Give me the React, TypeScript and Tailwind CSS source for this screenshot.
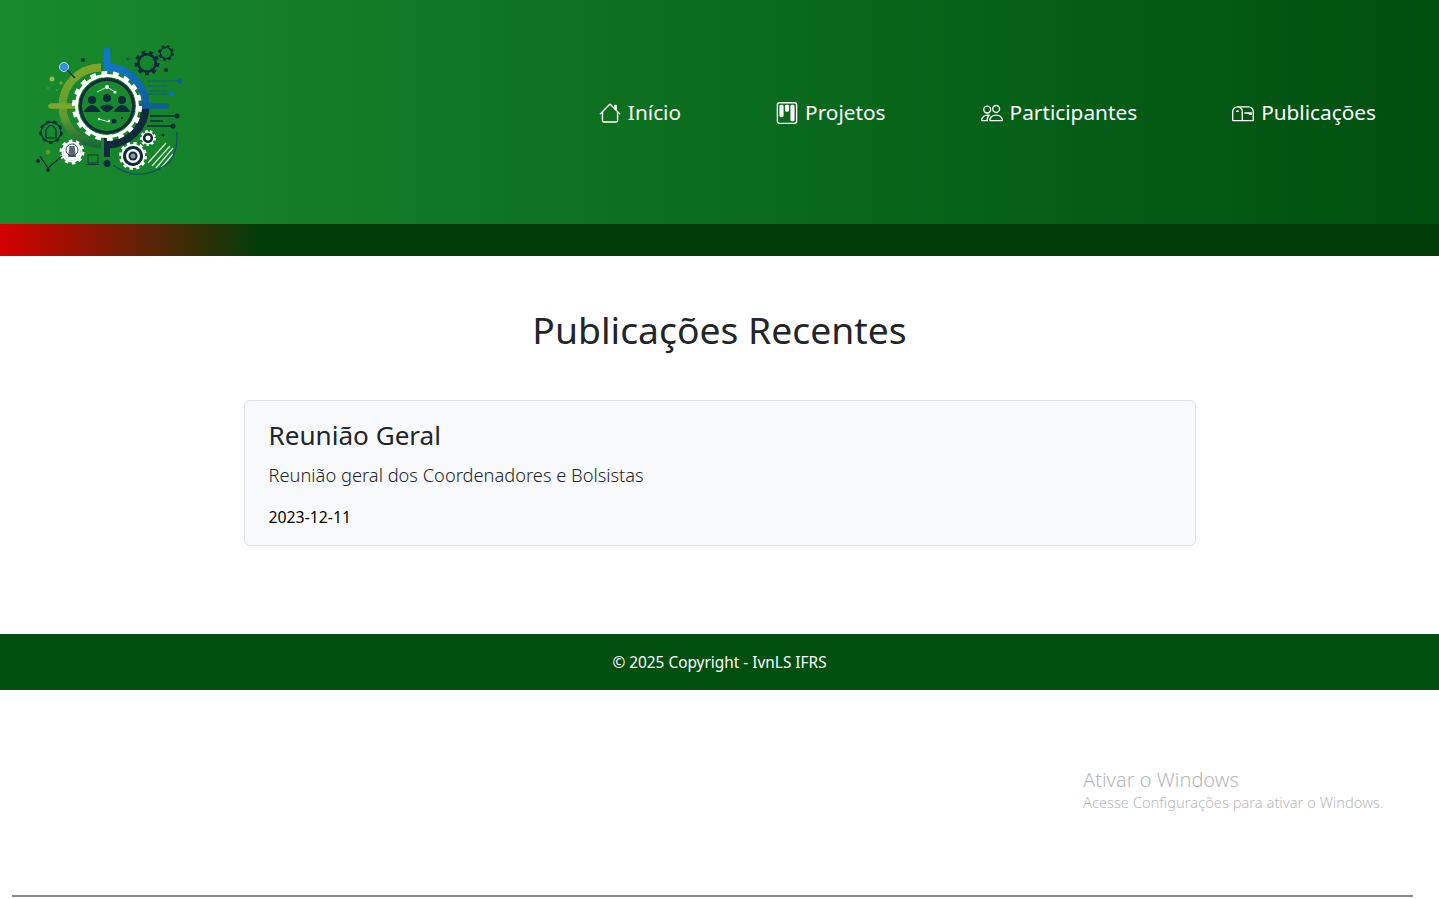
import { BsHouse, BsKanban, BsPeople, BsMailbox } from 'react-icons/bs';

const NAV = [
  { label: 'Início', Icon: BsHouse },
  { label: 'Projetos', Icon: BsKanban },
  { label: 'Participantes', Icon: BsPeople },
  { label: 'Publicações', Icon: BsMailbox },
];

const DARK = '#0f2a3a';

function Gear({ x, y, r, teeth, color, hole, width }: { x: number; y: number; r: number; teeth: number; color: string; hole?: string; width: number }) {
  const circ = 2 * Math.PI * r;
  const dash = circ / teeth / 2;
  return (
    <g>
      <circle cx={x} cy={y} r={r} fill="none" stroke={color} strokeWidth={width} strokeDasharray={`${dash} ${dash}`} />
      <circle cx={x} cy={y} r={r - width / 4} fill="none" stroke={color} strokeWidth={width / 2} />
      {hole && <circle cx={x} cy={y} r={r - width / 2} fill={hole} />}
    </g>
  );
}

function Logo() {
  return (
    <svg width="180" height="160" viewBox="0 0 180 160" className="mb-1 shrink-0">
      <defs>
        <linearGradient id="greenArc" x1="0" y1="0" x2="0" y2="1">
          <stop offset="0" stopColor="#7da52c" />
          <stop offset="0.65" stopColor="#5f9a30" />
          <stop offset="1" stopColor="#1a6a3a" />
        </linearGradient>
        <linearGradient id="blueArc" x1="0" y1="0" x2="1" y2="1">
          <stop offset="0" stopColor="#0f78c8" />
          <stop offset="1" stopColor="#0f5f9e" />
        </linearGradient>
      </defs>
      {/* arcs round the main gear */}
      <path d="M81 37.5 A38.5 38.5 0 0 0 81 114.5" fill="none" stroke="url(#greenArc)" strokeWidth="8" />
      <path d="M87 37.5 A38.5 38.5 0 0 1 125.5 76" fill="none" stroke="url(#blueArc)" strokeWidth="8" />
      <path d="M125.5 76 A38.5 38.5 0 0 1 87 114.5" fill="none" stroke={DARK} strokeWidth="8" />
      {/* spokes */}
      <line x1="87" y1="21" x2="87" y2="38" stroke="#0f78c8" strokeWidth="6.5" strokeLinecap="round" />
      <line x1="31" y1="76" x2="55" y2="76" stroke="#7da52c" strokeWidth="5.5" strokeLinecap="round" />
      <line x1="122" y1="76" x2="146" y2="76" stroke="#0f5f9e" strokeWidth="5.5" strokeLinecap="round" />
      <line x1="87" y1="108" x2="87" y2="127" stroke={DARK} strokeWidth="6" />
      <circle cx="87" cy="133.5" r="3.5" fill={DARK} />
      {/* main gear */}
      <Gear x={87} y={76} r={32} teeth={18} color="#ffffff" width={6} />
      <circle cx="87" cy="76" r="28" fill={DARK} />
      <circle cx="87" cy="76" r="25" fill="#178a2e" />
      {/* people */}
      <circle cx="72" cy="70" r="4" fill={DARK} />
      <circle cx="87" cy="68" r="4" fill={DARK} />
      <circle cx="102" cy="70" r="4" fill={DARK} />
      <path d="M63.5 82 Q72 68 80.5 82 Z" fill={DARK} />
      <path d="M93.5 82 Q102 68 110.5 82 Z" fill={DARK} />
      <path d="M80 77 Q87 72 94 77 Q90 82 87 82 Q84 82 80 77 Z" fill={DARK} />
      <path d="M77 62 L87 57 L95 62" fill="none" stroke="#fff" strokeWidth="0.8" />
      <circle cx="87" cy="57" r="2" fill="#fff" />
      <circle cx="95" cy="62" r="1.5" fill="#fff" />
      <path d="M79 89 L89 92" stroke="#fff" strokeWidth="0.8" />
      <circle cx="79" cy="89" r="1.2" fill="#fff" />
      <circle cx="89" cy="91" r="1.2" fill="#fff" />
      <circle cx="94" cy="91" r="2.5" fill={DARK} />
      <circle cx="102" cy="88" r="1.2" fill={DARK} />
      {/* top right gears */}
      <Gear x={127} y={33} r={10} teeth={9} color={DARK} width={5} />
      <Gear x={146} y={23} r={6.5} teeth={8} color={DARK} width={3} />
      <circle cx="146" cy="40" r="2" fill={DARK} />
      <circle cx="108" cy="29" r="1.5" fill="#24506a" />
      {/* right lines */}
      <path d="M127 51 H160 M127 56 H147 M130 61 H147 M128 64 H150" stroke="#0f5a8a" strokeWidth="1" />
      <circle cx="160" cy="51" r="2.5" fill="#0f5f9e" />
      <circle cx="151" cy="64" r="2.5" fill="#0f6fb5" />
      <path d="M130 86 H157 M130 91 H143 M127 96 H153" stroke={DARK} strokeWidth="1.5" />
      <circle cx="157" cy="86" r="2.5" fill={DARK} />
      <circle cx="153" cy="96" r="2.5" fill={DARK} />
      {/* lower right gears */}
      <Gear x={113} y={126} r={12} teeth={12} color="#ffffff" width={4} hole={DARK} />
      <circle cx="113" cy="126" r="7" fill="#ffffff" />
      <circle cx="113" cy="126" r="4.5" fill={DARK} />
      <circle cx="113" cy="126" r="2.5" fill="#7f9fa0" />
      <Gear x={128} y={108} r={6.5} teeth={9} color="#ffffff" width={3} hole={DARK} />
      <circle cx="128" cy="108" r="2.5" fill="#fff" />
      <circle cx="143" cy="105" r="1.5" fill={DARK} />
      <path d="M128 133 L146 113 M132 136 L150 116 M136 138 L153 118 M141 138 L153 124" stroke="#cfe8d0" strokeWidth="1.3" />
      <path d="M93 135 Q120 155 150 132 Q158 120 157 102" fill="none" stroke="#134e6f" strokeWidth="1.3" />
      {/* left icons */}
      <circle cx="44" cy="37" r="4.5" fill="#2f8fe0" stroke="#bcdcf5" />
      <line x1="47" y1="40" x2="55" y2="48" stroke={DARK} strokeWidth="1.2" />
      <circle cx="63" cy="30" r="2" fill={DARK} />
      <circle cx="32" cy="49" r="2.5" fill="#8fbb5a" />
      <circle cx="41" cy="53" r="1.8" fill="#6f9f2c" />
      <circle cx="28" cy="58" r="0.8" fill="#6f9f2c" />
      <circle cx="37" cy="60" r="0.8" fill="#6f9f2c" />
      <Gear x={31} y={102} r={10.5} teeth={9} color={DARK} width={2.4} />
      <path d="M26 108 V100 Q31 91 36 100 V108 Z" fill="none" stroke={DARK} strokeWidth="1.2" />
      <Gear x={52} y={122} r={10.5} teeth={10} color="#ffffff" width={4} hole="#ffffff" />
      <circle cx="52" cy="120" r="6" fill="none" stroke={DARK} strokeWidth="0.8" />
      <path d="M48 127 H56 L54.5 116 H49.5 Z" fill={DARK} opacity="0.7" />
      <circle cx="28" cy="122" r="2.5" fill="#6f9f2c" opacity="0.7" />
      <path d="M20 126 L28 138 L42 126" fill="none" stroke={DARK} strokeWidth="1.2" />
      <circle cx="18" cy="131" r="2" fill={DARK} />
      <circle cx="28" cy="140" r="2" fill={DARK} />
      <rect x="68" y="125" width="10" height="8" fill="none" stroke={DARK} strokeWidth="0.8" />
      <line x1="66" y1="134.5" x2="79" y2="134.5" stroke={DARK} strokeWidth="0.8" />
    </svg>
  );
}

export default function App() {
  return (
    <div className="relative min-h-[899px] bg-white font-['Noto_Sans',sans-serif] text-[#212529]">
      <header className="flex h-[224px] items-center justify-between bg-gradient-to-r from-[#188a2d] to-[#004f0e] pl-5 pr-[15.5px]">
        <Logo />
        <ul className="flex items-center pt-[2px]">
          {NAV.map(({ label, Icon }) => (
            <li key={label} className="flex items-center gap-[7px] px-[47.5px] text-[20.8px] text-white">
              <Icon className="size-[22px]" />
              <span>{label}</span>
            </li>
          ))}
        </ul>
      </header>
      <div className="h-8 bg-[linear-gradient(to_right,#d40000,#003d08_260px)]" />

      <main className="flex flex-col items-center pt-[47px] pb-[88px]">
        <h1 className="text-center text-[37.3px] leading-[54px]">Publicações Recentes</h1>
        <section className="mt-[43px] h-[146px] w-[952px] rounded-md border border-[#dee2e6] bg-[#f8f9fa] px-6 pt-[15px]">
          <h3 className="text-[26.1px] leading-[38px]">Reunião Geral</h3>
          <p className="mt-[6px] text-[18.3px] leading-[30px] font-light">Reunião geral dos Coordenadores e Bolsistas</p>
          <p className="mt-[15px] text-[15.8px] leading-[24px] text-black">2023-12-11</p>
        </section>
      </main>

      <footer className="flex h-14 items-center justify-center bg-[#004f0e] pt-[2px] text-[15.4px] text-white">© 2025 Copyright - IvnLS IFRS</footer>

      {/* windows watermark, sits over the page */}
      <div className="absolute top-[766px] left-[1083px] font-light text-[#b8b8b8]">
        <p className="text-[20px] leading-[27px]">Ativar o Windows</p>
        <p className="text-[14.7px] leading-[18px]">Acesse Configurações para ativar o Windows.</p>
      </div>
      <div className="absolute top-[895px] left-3 h-[2px] w-[1401px] bg-[#8a8a8a]" />
    </div>
  );
}
